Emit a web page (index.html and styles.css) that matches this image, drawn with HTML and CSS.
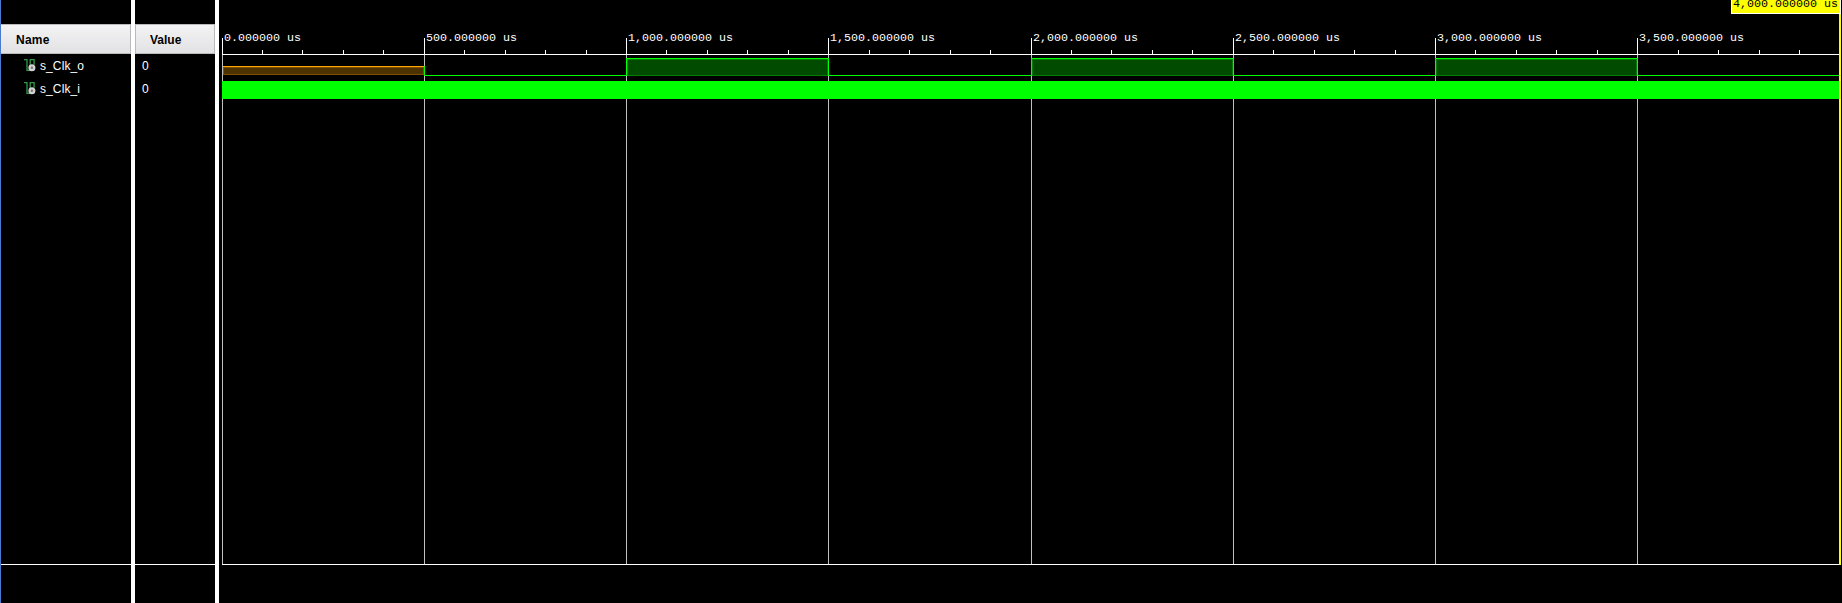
FILE: index.html
```html
<!DOCTYPE html>
<html lang="en">
<head>
<meta charset="utf-8">
<title>Waveform</title>
<link rel="stylesheet" href="styles.css">
</head>
<body>
<svg width="0" height="0" class="defs">
  <symbol id="signal" viewBox="0 0 12 13">
    <path d="M0 .7h3v10.6h3.2V.7h3.9v5" fill="none" stroke="#2f9a48" stroke-width="1.3"/>
    <circle cx="7.9" cy="8.8" r="3.5" fill="#d2d2d2"/>
    <circle cx="7.9" cy="8.8" r="1.2" fill="#777"/>
  </symbol>
</svg>
<main class="viewer">
  <section class="column names">
    <header class="heading">Name</header>
    <ul class="rows">
      <li class="row"><svg class="icon"><use href="#signal"/></svg><span class="text">s_Clk_o</span></li>
      <li class="row"><svg class="icon"><use href="#signal"/></svg><span class="text">s_Clk_i</span></li>
    </ul>
    <div class="footer"></div>
  </section>
  <section class="column values">
    <header class="heading">Value</header>
    <ul class="rows">
      <li class="row"><span class="text">0</span></li>
      <li class="row"><span class="text">0</span></li>
    </ul>
    <div class="footer"></div>
  </section>
  <section class="waves">
    <svg id="plot" class="plot" viewBox="219 0 1623 603" width="1623" height="603"></svg>
  </section>
</main>
<script src="wave.js"></script>
</body>
</html>
```

FILE: styles.css
```css
* { box-sizing: border-box; }
body { margin: 0; background: #000; overflow: hidden; }
.defs { position: absolute; }
.viewer {
  display: flex;
  height: 603px;
  border-left: 1px solid #4a7ad0;
  color: #fff;
  font: 12px/23px "Liberation Sans", Arial, sans-serif;
}
.column {
  display: flex;
  flex-direction: column;
  padding-top: 24px;
  border-right: 4px solid #fff;
}
.names { width: 134px; }
.values { width: 84px; }
.heading {
  height: 30px;
  border: 1px solid #b8babc;
  background: linear-gradient(#f3f3f4, #e2e2e4);
  color: #000;
  font-weight: bold;
  line-height: 30px;
}
.names .heading { padding-left: 15px; border-left: 0; letter-spacing: .25px; }
.values .heading { padding-left: 14px; }
.rows { flex: 1; margin: 0; padding: 0; list-style: none; }
.row { display: flex; align-items: center; height: 23px; }
.text { padding-top: 2px; }
.names .row { padding-left: 23px; gap: 4px; letter-spacing: .1px; }
.values .row { padding-left: 7px; }
.icon { width: 12px; height: 13px; }
.footer { height: 39px; border-top: 1px solid #fff; }
.waves { flex: 1; }
.plot { display: block; shape-rendering: crispEdges; }
.white { fill: #fff; }
.grid { fill: #c0c0c0; }
.signal { fill: #0f0; }
.high { fill: #004b00; stroke: #008000; }
.undefined { fill: #4b3200; stroke: #804e00; }
.undefined-top { fill: #ffa500; }
.cursor { fill: #ff0; }
.time { fill: #fff; font: 11.67px "Liberation Mono", "Courier New", monospace; }
.cursor-time { fill: #000; }
```

FILE: wave.js
```js
const plot = document.getElementById("plot");
const left = 222, right = 1839, step = 40.45;
const position = k => Math.floor(left + k * step);

function add(name, attributes, text) {
  const node = document.createElementNS("http://www.w3.org/2000/svg", name);
  for (const key in attributes) node.setAttribute(key, attributes[key]);
  if (text) node.textContent = text;
  plot.appendChild(node);
}
function rect(kind, x, y, width, height) {
  add("rect", { class: kind, x, y, width, height });
}
function label(kind, x, y, text) {
  add("text", { class: kind, x, y, textLength: text.length * 7 }, text);
}

// Time ruler and grid
const times = ["0", "500", "1,000", "1,500", "2,000", "2,500", "3,000", "3,500"];
for (let k = 0; k < 40; k++) {
  const x = position(k);
  if (k % 5) {
    rect("white", x, 50, 1, 4);
  } else {
    rect("grid", x, 55, 1, 509);
    rect("white", x, 38, 1, 16);
    label("time", x + 2, 41, times[k / 5] + ".000000 us");
  }
}
rect("white", left, 54, right - left, 1);
rect("white", left, 564, right - left, 1);

// s_Clk_o: undefined for the first interval, then alternating levels
const edges = [0, 5, 10, 15, 20, 25, 30, 35].map(position).concat(right);
add("rect", { class: "undefined", x: left + 1.5, y: 67.5, width: edges[1] - left - 2, height: 7 });
rect("undefined-top", left + 1, 66, edges[1] - left - 1, 1);
rect("signal", edges[1], 66, 1, 10);
for (let i = 1; i < 8; i++) {
  const x = edges[i], width = edges[i + 1] - x;
  if (i % 2) {
    rect("signal", x, 75, width, 1);
  } else {
    add("rect", { class: "high", x: x + 1.5, y: 59.5, width: width - 2, height: 16 });
    rect("signal", x, 58, width + 1, 1);
    rect("signal", x, 58, 1, 18);
    rect("signal", x + width, 58, 1, 18);
  }
}

// s_Clk_i toggles too fast to resolve at this scale
rect("signal", left, 81, right - left, 18);

// Cursor
rect("cursor", right, 14, 2, 551);
rect("white", 1731, 0, 110, 14);
rect("cursor", 1732, 0, 108, 13);
label("time cursor-time", 1733, 7, "4,000.000000 us");
```
